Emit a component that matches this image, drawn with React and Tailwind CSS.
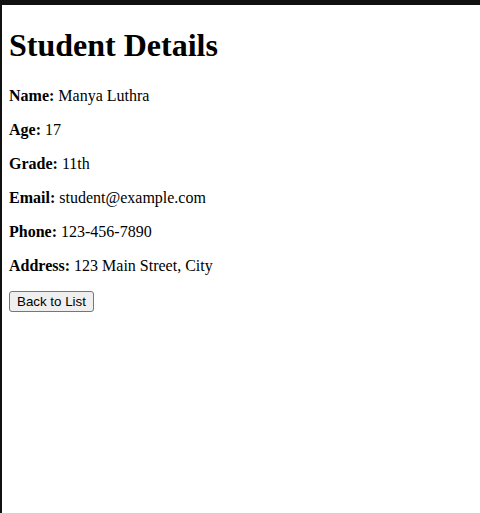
import React from "react";

const StudentDetails = () => {
  const student = [
    { label: "Name", value: "Manya Luthra" },
    { label: "Age", value: "17" },
    { label: "Grade", value: "11th" },
    { label: "Email", value: "student@example.com" },
    { label: "Phone", value: "123-456-7890" },
    { label: "Address", value: "123 Main Street, City" },
  ];

  return (
    <div className="min-h-screen bg-white border-t-[5px] border-l-2 border-[#111111] px-[7px] font-['Liberation_Serif',serif] text-black">
      <h1 className="text-[32px] font-bold leading-[37px] mt-[22px] mb-[23px]">
        Student Details
      </h1>
      {student.map((item, index) => (
        <p key={index} className="text-base leading-[18px] my-4">
          <strong className="font-bold">{item.label}:</strong> {item.value}
        </p>
      ))}
      <button className="block mt-[12px] font-['Liberation_Sans',Arial,sans-serif] text-[13.33px] leading-[17px] px-[7px] py-[1px] border border-[#767676] rounded-[3px] bg-[#efefef] text-black">
        Back to List
      </button>
    </div>
  );
};

export default StudentDetails;
